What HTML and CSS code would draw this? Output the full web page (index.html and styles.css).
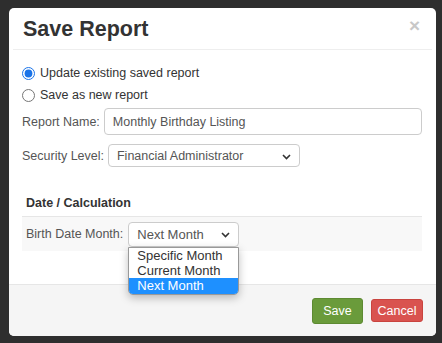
FILE: index.html
```html
<!DOCTYPE html>
<html lang="en">
<head>
    <meta charset="UTF-8">
    <title>Save Report</title>
    <link rel="stylesheet" href="styles.css">
</head>
<body>
    <div class="modal">
        <div class="modal-header">
            <h1>Save Report</h1>
            <span class="close">&times;</span>
        </div>

        <div class="modal-body">
            <label class="radio"><input type="radio" name="mode" checked> Update existing saved report</label>
            <label class="radio"><input type="radio" name="mode"> Save as new report</label>

            <div class="field name-field">
                <span class="field-label">Report Name:</span>
                <div class="input">Monthly Birthday Listing</div>
            </div>

            <div class="field level-field">
                <span class="field-label">Security Level:</span>
                <div class="select level-select">
                    Financial Administrator
                    <svg class="chev" width="9" height="6" viewBox="0 0 9 6"><path d="M1 1l3.5 3.5L8 1" fill="none" stroke="#333" stroke-width="1.6"/></svg>
                </div>
            </div>

            <h2 class="section-title">Date / Calculation</h2>
            <div class="calc-row">
                <span class="field-label">Birth Date Month:</span>
                <div class="month-wrap">
                    <div class="select month-select">
                        Next Month
                        <svg class="chev" width="9" height="6" viewBox="0 0 9 6"><path d="M1 1l3.5 3.5L8 1" fill="none" stroke="#333" stroke-width="1.6"/></svg>
                    </div>
                    <!-- open dropdown list -->
                    <ul class="options">
                        <li>Specific Month</li>
                        <li>Current Month</li>
                        <li class="active">Next Month</li>
                    </ul>
                </div>
            </div>
        </div>

        <div class="modal-footer">
            <button class="btn btn-save">Save</button>
            <button class="btn btn-cancel">Cancel</button>
        </div>
    </div>
</body>
</html>
```

FILE: styles.css
```css
body { margin: 0; background: #2e2e2e; padding: 8px 6px 7px 9px; font-family: "Liberation Sans", Arial, sans-serif; font-size: 12.5px; color: #333; }
.modal { width: 427px; height: 328px; background: #fff; border-radius: 5px; display: flex; flex-direction: column; overflow: visible; }

.modal-header { height: 41px; border-bottom: 1px solid #eee; margin: 0 4px; padding: 0 10px; display: flex; align-items: center; justify-content: space-between; }
.modal-header h1 { margin: 0; font-size: 21.5px; font-weight: bold; color: #333; padding-top: 1px; }
.close { font-size: 19px; color: #c8c8c8; font-weight: bold; margin-right: 2px; margin-top: -6px; }

.modal-body { flex: 1; padding: 12px 14px 0 13px; position: relative; }
.radio { display: flex; align-items: center; height: 22px; color: #333; }
.radio input { margin: 0 5px 0 0; width: 13px; height: 13px; accent-color: #1a73e8; }

.field { display: flex; align-items: center; color: #555; }
.field-label { color: #555; }
.name-field { margin-top: 2px; }
.name-field .input { flex: 1; height: 25px; margin-left: 4px; border: 1px solid #ccc; border-radius: 4px; padding: 0 8px; display: flex; align-items: center; color: #555; }
.level-field { margin-top: 9px; }

.select { position: relative; border: 1px solid #ccc; border-radius: 4px; display: flex; align-items: center; background: #fff; color: #555; }
.select .chev { position: absolute; right: 8px; top: 50%; margin-top: -2px; }
.level-select { width: 182px; height: 21px; margin-left: 4px; padding-left: 8px; }

.section-title { margin: 29px 0 0; padding: 0 0 6px 4px; font-size: 12.5px; font-weight: bold; color: #333; border-bottom: 1px solid #e6e6e6; }
.calc-row { display: flex; align-items: center; height: 34px; background: #f8f8f8; padding-left: 4px; }
.month-wrap { position: relative; margin-left: 5px; }
.month-select { width: 101px; height: 23px; padding-left: 8px; font-size: 13px; }

.options { position: absolute; left: 0; top: 25px; width: 109px; margin: 0; padding: 0; list-style: none; background: #fff; border: 1px solid #999; border-radius: 0 0 5px 5px; box-shadow: 0 3px 8px rgba(0,0,0,0.25); font-size: 13px; color: #333; overflow: hidden; z-index: 2; }
.options li { height: 15px; line-height: 15px; padding-left: 8px; }
.options li.active { background: #1e90ff; color: #fff; height: 16px; }

.modal-footer { height: 51px; background: #f5f5f5; border-top: 1px solid #e6e6e6; border-radius: 0 0 5px 5px; display: flex; align-items: center; justify-content: flex-end; gap: 8px; padding-right: 13px; }
.btn { border: none; color: #fff; font-family: "Liberation Sans", Arial, sans-serif; font-size: 12.5px; border-radius: 3px; padding: 0; }
.btn-save { width: 51px; height: 26px; background: #6a9b3b; border: 1px solid #5d8a32; }
.btn-cancel { width: 52px; height: 23px; background: #d9534f; border: 1px solid #c9443f; }
```
